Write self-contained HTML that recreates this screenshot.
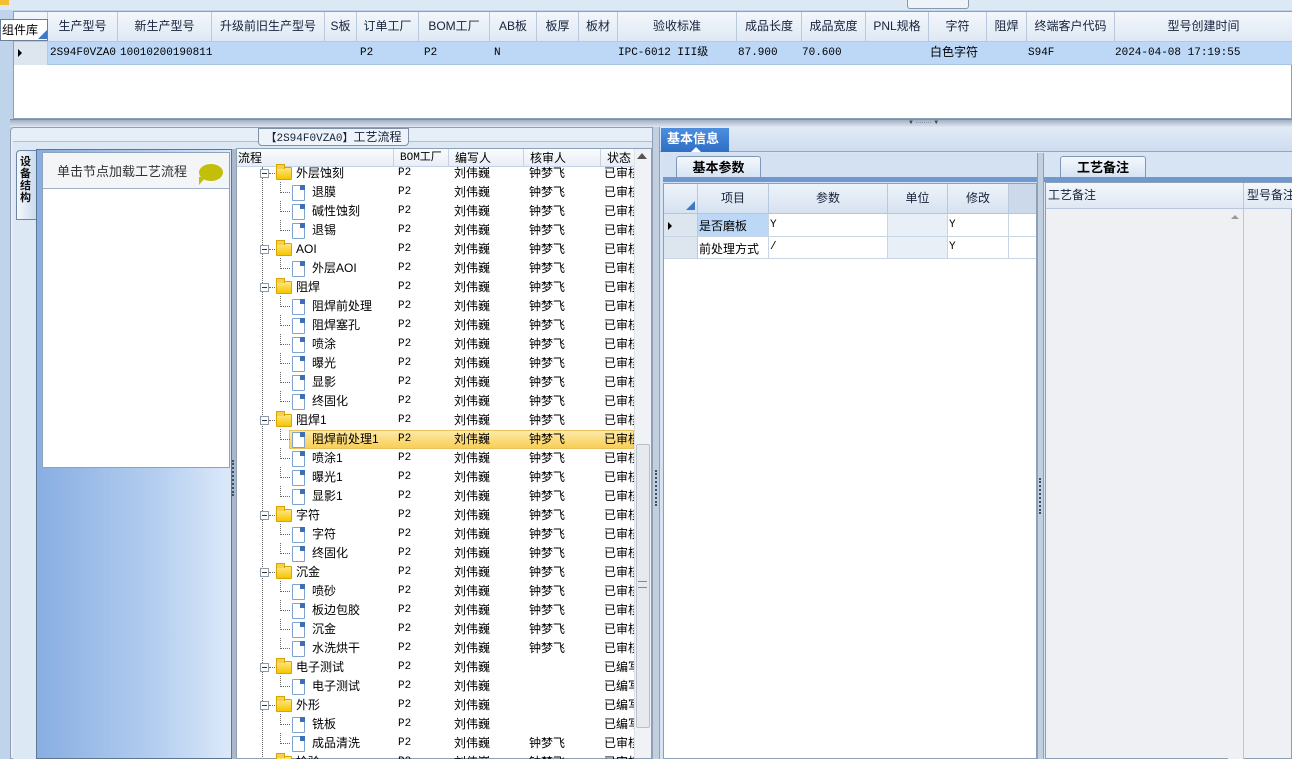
<!DOCTYPE html>
<html><head><meta charset="utf-8">
<style>
*{margin:0;padding:0;box-sizing:border-box}
body{width:1292px;height:759px;overflow:hidden;background:#bfd3ea;font-family:"Liberation Sans","Noto Sans CJK SC",sans-serif;font-size:12px;color:#000;position:relative}
.a{position:absolute}
.hd{position:absolute;top:0;height:100%;border-right:1px solid #b9c9dd;text-align:center;line-height:29px;font-size:12px;color:#15223a;white-space:nowrap}
.mono{font-family:"Liberation Mono","Noto Sans CJK SC",monospace;font-size:11px}
.tr{position:absolute;left:0;width:396px;height:19px;line-height:19px;font-size:12px}
.tr span{position:absolute;top:0;white-space:nowrap;overflow:hidden}
.fold{position:absolute;left:38px;top:3px;width:16px;height:13px;background:linear-gradient(#ffe680,#f5c400);border:1px solid #d9a400;border-radius:1px}
.fold:before{content:"";position:absolute;left:-1px;top:-4px;width:7px;height:4px;background:#f5d050;border:1px solid #d9a400;border-bottom:none}
.exp{position:absolute;left:22px;top:5px;width:9px;height:9px;border:1px solid #8c9aac;background:#fff}
.exp:after{content:"";position:absolute;left:1px;top:3px;width:5px;height:1px;background:#333}
.dh{position:absolute;left:31px;top:9px;width:6px;border-top:1px dotted #666}
.leaf{position:absolute;left:54px;top:2px;width:13px;height:16px;background:#fff;border:1px solid #7fa3cf;border-radius:1px}
.leaf:after{content:"";position:absolute;right:-1px;top:-1px;width:5px;height:5px;background:#3d6fb4}
.lh{position:absolute;left:42px;top:9px;width:10px;border-top:1px dotted #666}
.lv{position:absolute;left:42px;top:-1px;height:11px;border-left:1px dotted #666}
.c1{left:160px}.c2{left:216px}.c3{left:291px}.c4{left:366px;width:30px}
</style></head><body>
<div class="a" style="left:0;top:0;width:1292px;height:10px;background:#dde8f5"></div>
<div class="a" style="left:0;top:0;width:9px;height:5px;background:#f0c030"></div>
<div class="a" style="left:907px;top:0;width:62px;height:9px;border:1px solid #8798ad;border-top:none;background:#eef3f9;border-radius:0 0 3px 3px"></div>
<div class="a" style="left:13px;top:11px;width:1279px;height:108px;background:#fff;border:1px solid #8f9fb5"></div>
<div class="a" style="left:14px;top:12px;width:1278px;height:30px;background:linear-gradient(#f3f7fc,#dfe8f3);border-bottom:1px solid #b9c9dd">
 <div class="hd" style="left:0;width:34px"></div>
 <div class="hd" style="left:34px;width:70px">生产型号</div>
 <div class="hd" style="left:104px;width:94px">新生产型号</div>
 <div class="hd" style="left:198px;width:113px">升级前旧生产型号</div>
 <div class="hd" style="left:311px;width:32px">S板</div>
 <div class="hd" style="left:343px;width:62px">订单工厂</div>
 <div class="hd" style="left:405px;width:71px">BOM工厂</div>
 <div class="hd" style="left:476px;width:47px">AB板</div>
 <div class="hd" style="left:523px;width:42px">板厚</div>
 <div class="hd" style="left:565px;width:39px">板材</div>
 <div class="hd" style="left:604px;width:119px">验收标准</div>
 <div class="hd" style="left:723px;width:65px">成品长度</div>
 <div class="hd" style="left:788px;width:64px">成品宽度</div>
 <div class="hd" style="left:852px;width:63px">PNL规格</div>
 <div class="hd" style="left:915px;width:58px">字符</div>
 <div class="hd" style="left:973px;width:40px">阻焊</div>
 <div class="hd" style="left:1013px;width:88px">终端客户代码</div>
 <div class="hd" style="left:1101px;width:177px;border:none">型号创建时间</div>
</div>
<div class="a" style="left:0;top:19px;width:48px;height:22px;background:#fff;border:1px solid #6d7f98;line-height:20px;font-size:12px;padding-left:1px">组件库</div>
<div class="a" style="left:38px;top:30px;width:0;height:0;border-left:9px solid transparent;border-bottom:9px solid #3c78c8"></div>
<div class="a" style="left:14px;top:42px;width:34px;height:23px;background:#dde5ef;border-right:1px solid #b9c9dd"></div>
<div class="a" style="left:18px;top:49px;width:0;height:0;border-left:4px solid #000;border-top:4px solid transparent;border-bottom:4px solid transparent"></div>
<div class="a mono" style="left:48px;top:42px;width:1244px;height:23px;background:#bcd8f6;line-height:23px;border-bottom:1px solid #a8c4e4">
 <span class="a" style="left:2px">2S94F0VZA0</span>
 <span class="a" style="left:72px">10010200190811</span>
 <span class="a" style="left:312px">P2</span>
 <span class="a" style="left:376px">P2</span>
 <span class="a" style="left:446px">N</span>
 <span class="a" style="left:570px">IPC-6012 III级</span>
 <span class="a" style="left:690px">87.900</span>
 <span class="a" style="left:754px">70.600</span>
 <span class="a" style="left:882px;font-size:12px">白色字符</span>
 <span class="a" style="left:980px">S94F</span>
 <span class="a" style="left:1067px">2024-04-08 17:19:55</span>
</div>
<div class="a" style="left:10px;top:119px;width:1282px;height:8px;background:linear-gradient(#9fb0c4,#dfe7f1);border-top:1px solid #7d8ea5"></div>
<div class="a" style="left:908px;top:121px;width:68px;height:4px;font-size:6px;line-height:4px;color:#445">▼ ········ ▼</div>
<div class="a" style="left:10px;top:127px;width:650px;height:632px;background:#e6eef8;border:1px solid #8ea0b6;border-radius:4px 0 0 0"></div>
<div class="a" style="left:13px;top:141px;width:645px;height:618px;background:#dde8f5;border-top:1px solid #aebfd4"></div>
<div class="a" style="left:258px;top:128px;width:151px;height:18px;background:#eef3fa;border:1px solid #7f90a7;border-radius:0 0 4px 4px;text-align:center;line-height:16px;font-size:12px;color:#15223a;white-space:nowrap"><span class="mono">【2S94F0VZA0】</span>工艺流程</div>
<div class="a" style="left:16px;top:150px;width:22px;height:70px;background:linear-gradient(90deg,#f5f8fc,#c5d7ee);border:1px solid #6e86a6;border-right:none;border-radius:4px 0 0 0"></div>
<div class="a" style="left:20px;top:156px;width:12px;font-size:11px;font-weight:bold;line-height:12px;color:#111">设<br>备<br>结<br>构</div>
<div class="a" style="left:36px;top:149px;width:196px;height:610px;background:linear-gradient(90deg,#88aee2,#b3cdef 60%,#dce9fa);border:1px solid #5d7694"></div>
<div class="a" style="left:42px;top:152px;width:188px;height:316px;background:#fff;border:1px solid #8ea2bc"></div>
<div class="a" style="left:43px;top:153px;width:186px;height:36px;background:#f4f5f7;border-bottom:1px solid #9fb1c8;line-height:38px;padding-left:14px;font-size:13px;color:#333">单击节点加载工艺流程</div>
<div class="a" style="left:199px;top:164px;width:24px;height:17px;background:#c2bf0a;border-radius:50%"></div>
<div class="a" style="left:199px;top:177px;width:0;height:0;border-top:8px solid #c2bf0a;border-right:7px solid transparent"></div>
<div class="a" style="left:232px;top:149px;width:4px;height:610px;background:#aab8c9"></div>
<div class="a" style="left:232px;top:460px;width:3px;height:36px;border-left:2px dotted #3b4f6b"></div>
<div class="a" style="left:236px;top:148px;width:416px;height:611px;background:#fff;border:1px solid #8ea0b6"></div>
<div class="a" style="left:237px;top:149px;width:397px;height:18px;background:linear-gradient(#fafcfe,#e8eef6);border-bottom:1px solid #c5d2e2;font-size:12px;line-height:18px">
 <span class="a" style="left:1px">流程</span>
 <span class="a mono" style="left:156px;height:18px;border-left:1px solid #c5d2e2;padding-left:6px">BOM工厂</span>
 <span class="a" style="left:211px;height:18px;border-left:1px solid #c5d2e2;padding-left:6px">编写人</span>
 <span class="a" style="left:286px;height:18px;border-left:1px solid #c5d2e2;padding-left:6px">核审人</span>
 <span class="a" style="left:363px;height:18px;border-left:1px solid #c5d2e2;padding-left:6px">状态</span>
</div>
<div class="a" style="left:634px;top:149px;width:17px;height:609px;background:#f0f2f5;border-left:1px solid #dde2e9"></div>
<div class="a" style="left:637px;top:153px;width:0;height:0;border-left:5px solid transparent;border-right:5px solid transparent;border-bottom:6px solid #555"></div>
<div class="a" style="left:636px;top:444px;width:14px;height:284px;background:#e6e9ee;border:1px solid #b8c0cb;border-radius:2px"></div>
<div class="a" style="left:638px;top:581px;width:9px;height:7px;border-top:1px solid #888;border-bottom:1px solid #888"></div>
<div class="a" style="left:262px;top:167px;height:592px;border-left:1px dotted #666"></div>
<div class="a" style="left:238px;top:164px;width:396px;height:595px;overflow:hidden">
<div class="a" style="left:0;top:0;width:396px">
<div class="tr" style="top:0"><div class="exp"></div><div class="dh"></div><div class="fold"></div><span style="left:58px">外层蚀刻</span><span class="c1 mono">P2</span><span class="c2">刘伟巍</span><span class="c3">钟梦飞</span><span class="c4">已审核</span></div>
<div class="tr" style="top:19px"><div class="lv"></div><div class="lh"></div><div class="leaf"></div><span style="left:74px">退膜</span><span class="c1 mono">P2</span><span class="c2">刘伟巍</span><span class="c3">钟梦飞</span><span class="c4">已审核</span></div>
<div class="tr" style="top:38px"><div class="lv"></div><div class="lh"></div><div class="leaf"></div><span style="left:74px">碱性蚀刻</span><span class="c1 mono">P2</span><span class="c2">刘伟巍</span><span class="c3">钟梦飞</span><span class="c4">已审核</span></div>
<div class="tr" style="top:57px"><div class="lv"></div><div class="lh"></div><div class="leaf"></div><span style="left:74px">退锡</span><span class="c1 mono">P2</span><span class="c2">刘伟巍</span><span class="c3">钟梦飞</span><span class="c4">已审核</span></div>
<div class="tr" style="top:76px"><div class="exp"></div><div class="dh"></div><div class="fold"></div><span style="left:58px">AOI</span><span class="c1 mono">P2</span><span class="c2">刘伟巍</span><span class="c3">钟梦飞</span><span class="c4">已审核</span></div>
<div class="tr" style="top:95px"><div class="lv"></div><div class="lh"></div><div class="leaf"></div><span style="left:74px">外层AOI</span><span class="c1 mono">P2</span><span class="c2">刘伟巍</span><span class="c3">钟梦飞</span><span class="c4">已审核</span></div>
<div class="tr" style="top:114px"><div class="exp"></div><div class="dh"></div><div class="fold"></div><span style="left:58px">阻焊</span><span class="c1 mono">P2</span><span class="c2">刘伟巍</span><span class="c3">钟梦飞</span><span class="c4">已审核</span></div>
<div class="tr" style="top:133px"><div class="lv"></div><div class="lh"></div><div class="leaf"></div><span style="left:74px">阻焊前处理</span><span class="c1 mono">P2</span><span class="c2">刘伟巍</span><span class="c3">钟梦飞</span><span class="c4">已审核</span></div>
<div class="tr" style="top:152px"><div class="lv"></div><div class="lh"></div><div class="leaf"></div><span style="left:74px">阻焊塞孔</span><span class="c1 mono">P2</span><span class="c2">刘伟巍</span><span class="c3">钟梦飞</span><span class="c4">已审核</span></div>
<div class="tr" style="top:171px"><div class="lv"></div><div class="lh"></div><div class="leaf"></div><span style="left:74px">喷涂</span><span class="c1 mono">P2</span><span class="c2">刘伟巍</span><span class="c3">钟梦飞</span><span class="c4">已审核</span></div>
<div class="tr" style="top:190px"><div class="lv"></div><div class="lh"></div><div class="leaf"></div><span style="left:74px">曝光</span><span class="c1 mono">P2</span><span class="c2">刘伟巍</span><span class="c3">钟梦飞</span><span class="c4">已审核</span></div>
<div class="tr" style="top:209px"><div class="lv"></div><div class="lh"></div><div class="leaf"></div><span style="left:74px">显影</span><span class="c1 mono">P2</span><span class="c2">刘伟巍</span><span class="c3">钟梦飞</span><span class="c4">已审核</span></div>
<div class="tr" style="top:228px"><div class="lv"></div><div class="lh"></div><div class="leaf"></div><span style="left:74px">终固化</span><span class="c1 mono">P2</span><span class="c2">刘伟巍</span><span class="c3">钟梦飞</span><span class="c4">已审核</span></div>
<div class="tr" style="top:247px"><div class="exp"></div><div class="dh"></div><div class="fold"></div><span style="left:58px">阻焊1</span><span class="c1 mono">P2</span><span class="c2">刘伟巍</span><span class="c3">钟梦飞</span><span class="c4">已审核</span></div>
<div class="tr" style="top:266px"><div class="a" style="left:51px;top:0;width:345px;height:19px;background:linear-gradient(#fde9a8,#f8cf55);border:1px solid #e9c25a"></div><div class="lv"></div><div class="lh"></div><div class="leaf"></div><span style="left:74px">阻焊前处理1</span><span class="c1 mono">P2</span><span class="c2">刘伟巍</span><span class="c3">钟梦飞</span><span class="c4">已审核</span></div>
<div class="tr" style="top:285px"><div class="lv"></div><div class="lh"></div><div class="leaf"></div><span style="left:74px">喷涂1</span><span class="c1 mono">P2</span><span class="c2">刘伟巍</span><span class="c3">钟梦飞</span><span class="c4">已审核</span></div>
<div class="tr" style="top:304px"><div class="lv"></div><div class="lh"></div><div class="leaf"></div><span style="left:74px">曝光1</span><span class="c1 mono">P2</span><span class="c2">刘伟巍</span><span class="c3">钟梦飞</span><span class="c4">已审核</span></div>
<div class="tr" style="top:323px"><div class="lv"></div><div class="lh"></div><div class="leaf"></div><span style="left:74px">显影1</span><span class="c1 mono">P2</span><span class="c2">刘伟巍</span><span class="c3">钟梦飞</span><span class="c4">已审核</span></div>
<div class="tr" style="top:342px"><div class="exp"></div><div class="dh"></div><div class="fold"></div><span style="left:58px">字符</span><span class="c1 mono">P2</span><span class="c2">刘伟巍</span><span class="c3">钟梦飞</span><span class="c4">已审核</span></div>
<div class="tr" style="top:361px"><div class="lv"></div><div class="lh"></div><div class="leaf"></div><span style="left:74px">字符</span><span class="c1 mono">P2</span><span class="c2">刘伟巍</span><span class="c3">钟梦飞</span><span class="c4">已审核</span></div>
<div class="tr" style="top:380px"><div class="lv"></div><div class="lh"></div><div class="leaf"></div><span style="left:74px">终固化</span><span class="c1 mono">P2</span><span class="c2">刘伟巍</span><span class="c3">钟梦飞</span><span class="c4">已审核</span></div>
<div class="tr" style="top:399px"><div class="exp"></div><div class="dh"></div><div class="fold"></div><span style="left:58px">沉金</span><span class="c1 mono">P2</span><span class="c2">刘伟巍</span><span class="c3">钟梦飞</span><span class="c4">已审核</span></div>
<div class="tr" style="top:418px"><div class="lv"></div><div class="lh"></div><div class="leaf"></div><span style="left:74px">喷砂</span><span class="c1 mono">P2</span><span class="c2">刘伟巍</span><span class="c3">钟梦飞</span><span class="c4">已审核</span></div>
<div class="tr" style="top:437px"><div class="lv"></div><div class="lh"></div><div class="leaf"></div><span style="left:74px">板边包胶</span><span class="c1 mono">P2</span><span class="c2">刘伟巍</span><span class="c3">钟梦飞</span><span class="c4">已审核</span></div>
<div class="tr" style="top:456px"><div class="lv"></div><div class="lh"></div><div class="leaf"></div><span style="left:74px">沉金</span><span class="c1 mono">P2</span><span class="c2">刘伟巍</span><span class="c3">钟梦飞</span><span class="c4">已审核</span></div>
<div class="tr" style="top:475px"><div class="lv"></div><div class="lh"></div><div class="leaf"></div><span style="left:74px">水洗烘干</span><span class="c1 mono">P2</span><span class="c2">刘伟巍</span><span class="c3">钟梦飞</span><span class="c4">已审核</span></div>
<div class="tr" style="top:494px"><div class="exp"></div><div class="dh"></div><div class="fold"></div><span style="left:58px">电子测试</span><span class="c1 mono">P2</span><span class="c2">刘伟巍</span><span class="c4">已编写</span></div>
<div class="tr" style="top:513px"><div class="lv"></div><div class="lh"></div><div class="leaf"></div><span style="left:74px">电子测试</span><span class="c1 mono">P2</span><span class="c2">刘伟巍</span><span class="c4">已编写</span></div>
<div class="tr" style="top:532px"><div class="exp"></div><div class="dh"></div><div class="fold"></div><span style="left:58px">外形</span><span class="c1 mono">P2</span><span class="c2">刘伟巍</span><span class="c4">已编写</span></div>
<div class="tr" style="top:551px"><div class="lv"></div><div class="lh"></div><div class="leaf"></div><span style="left:74px">铣板</span><span class="c1 mono">P2</span><span class="c2">刘伟巍</span><span class="c4">已编写</span></div>
<div class="tr" style="top:570px"><div class="lv"></div><div class="lh"></div><div class="leaf"></div><span style="left:74px">成品清洗</span><span class="c1 mono">P2</span><span class="c2">刘伟巍</span><span class="c3">钟梦飞</span><span class="c4">已审核</span></div>
<div class="tr" style="top:589px"><div class="exp"></div><div class="dh"></div><div class="fold"></div><span style="left:58px">检验</span><span class="c1 mono">P2</span><span class="c2">刘伟巍</span><span class="c3">钟梦飞</span><span class="c4">已审核</span></div>
</div></div>
<div class="a" style="left:652px;top:127px;width:8px;height:632px;background:#c2cfdf;border-left:1px solid #8ea0b6;border-right:1px solid #8ea0b6"></div>
<div class="a" style="left:655px;top:470px;width:3px;height:36px;border-left:2px dotted #3b4f6b"></div>
<div class="a" style="left:660px;top:127px;width:632px;height:632px;background:#d7e4f4"></div>
<div class="a" style="left:660px;top:127px;width:632px;height:25px;background:linear-gradient(#e2ebf7,#cddcef);border-bottom:1px solid #8fa7c7"></div>
<div class="a" style="left:661px;top:128px;width:68px;height:24px;background:linear-gradient(#4d8ede,#2f6fc4);color:#fff;font-weight:bold;font-size:13px;line-height:22px;padding-left:6px">基本信息</div>
<div class="a" style="left:691px;top:147px;width:0;height:0;border-left:5px solid transparent;border-right:5px solid transparent;border-bottom:5px solid #fff"></div>
<div class="a" style="left:662px;top:153px;width:376px;height:606px;background:#d3e1f2"></div>
<div class="a" style="left:676px;top:156px;width:85px;height:22px;background:linear-gradient(#f5f8fc,#d5e2f2);border:1px solid #7f97b7;border-bottom:none;border-radius:3px 3px 0 0;text-align:center;line-height:21px;font-weight:bold;font-size:13px">基本参数</div>
<div class="a" style="left:663px;top:177px;width:374px;height:5px;background:#6e98cf"></div>
<div class="a" style="left:663px;top:183px;width:374px;height:576px;background:#fff;border:1px solid #8ea0b6"></div>
<div class="a" style="left:664px;top:184px;width:372px;height:30px;background:linear-gradient(#eef3fa,#d6e2f0);border-bottom:1px solid #b4c6dc">
 <div class="hd" style="left:0;width:34px"></div>
 <div class="hd" style="left:34px;width:71px">项目</div>
 <div class="hd" style="left:105px;width:119px">参数</div>
 <div class="hd" style="left:224px;width:60px">单位</div>
 <div class="hd" style="left:284px;width:61px">修改</div>
 <div class="hd" style="left:345px;width:27px;background:#ccd9ea;border:none"></div>
</div>
<div class="a" style="left:686px;top:201px;width:0;height:0;border-left:9px solid transparent;border-bottom:9px solid #3c78c8"></div>
<div class="a" style="left:664px;top:214px;width:34px;height:45px;background:#dde5ef;border-right:1px solid #b9c9dd"></div>
<div class="a" style="left:668px;top:222px;width:0;height:0;border-left:4px solid #000;border-top:4px solid transparent;border-bottom:4px solid transparent"></div>
<div class="a" style="left:698px;top:214px;width:70px;height:23px;background:#bcd8f6"></div>
<div class="a" style="left:887px;top:214px;width:60px;height:45px;background:#e8eff7"></div>
<div class="a" style="left:664px;top:236px;width:372px;border-top:1px solid #c8d5e5"></div>
<div class="a" style="left:664px;top:258px;width:372px;border-top:1px solid #c8d5e5"></div>
<div class="a" style="left:768px;top:214px;height:45px;border-left:1px solid #c8d5e5"></div>
<div class="a" style="left:887px;top:214px;height:45px;border-left:1px solid #c8d5e5"></div>
<div class="a" style="left:947px;top:214px;height:45px;border-left:1px solid #c8d5e5"></div>
<div class="a" style="left:1008px;top:214px;height:45px;border-left:1px solid #c8d5e5"></div>
<div class="a" style="left:699px;top:217px;font-size:12px">是否磨板</div>
<div class="a" style="left:699px;top:240px;font-size:12px">前处理方式</div>
<div class="a mono" style="left:770px;top:219px">Y</div>
<div class="a mono" style="left:770px;top:241px">/</div>
<div class="a mono" style="left:949px;top:219px">Y</div>
<div class="a mono" style="left:949px;top:241px">Y</div>
<div class="a" style="left:1037px;top:153px;width:7px;height:606px;background:#c2cfdf;border-left:1px solid #8ea0b6;border-right:1px solid #8ea0b6"></div>
<div class="a" style="left:1039px;top:478px;width:3px;height:36px;border-left:2px dotted #3b4f6b"></div>
<div class="a" style="left:1060px;top:156px;width:86px;height:22px;background:linear-gradient(#f5f8fc,#d5e2f2);border:1px solid #7f97b7;border-bottom:none;border-radius:3px 3px 0 0;text-align:center;line-height:21px;font-weight:bold;font-size:13px">工艺备注</div>
<div class="a" style="left:1044px;top:177px;width:248px;height:5px;background:#6e98cf"></div>
<div class="a" style="left:1045px;top:182px;width:247px;height:577px;background:#eef0f3;border:1px solid #8ea0b6"></div>
<div class="a" style="left:1046px;top:183px;width:246px;height:26px;background:linear-gradient(#f4f7fb,#dfe8f3);border-bottom:1px solid #b9c9dd;font-size:12px;line-height:24px;color:#15223a;overflow:hidden">
 <span class="a" style="left:2px">工艺备注</span>
 <span class="a" style="left:197px;height:26px;border-left:1px solid #b9c9dd;padding-left:3px;white-space:nowrap">型号备注</span>
</div>
<div class="a" style="left:1243px;top:209px;height:550px;border-left:1px solid #b9c9dd"></div>
<div class="a" style="left:1228px;top:209px;width:15px;height:550px;background:#eef0f3"></div>
<div class="a" style="left:1231px;top:215px;width:0;height:0;border-left:4px solid transparent;border-right:4px solid transparent;border-bottom:4px solid #999"></div>
</body></html>
